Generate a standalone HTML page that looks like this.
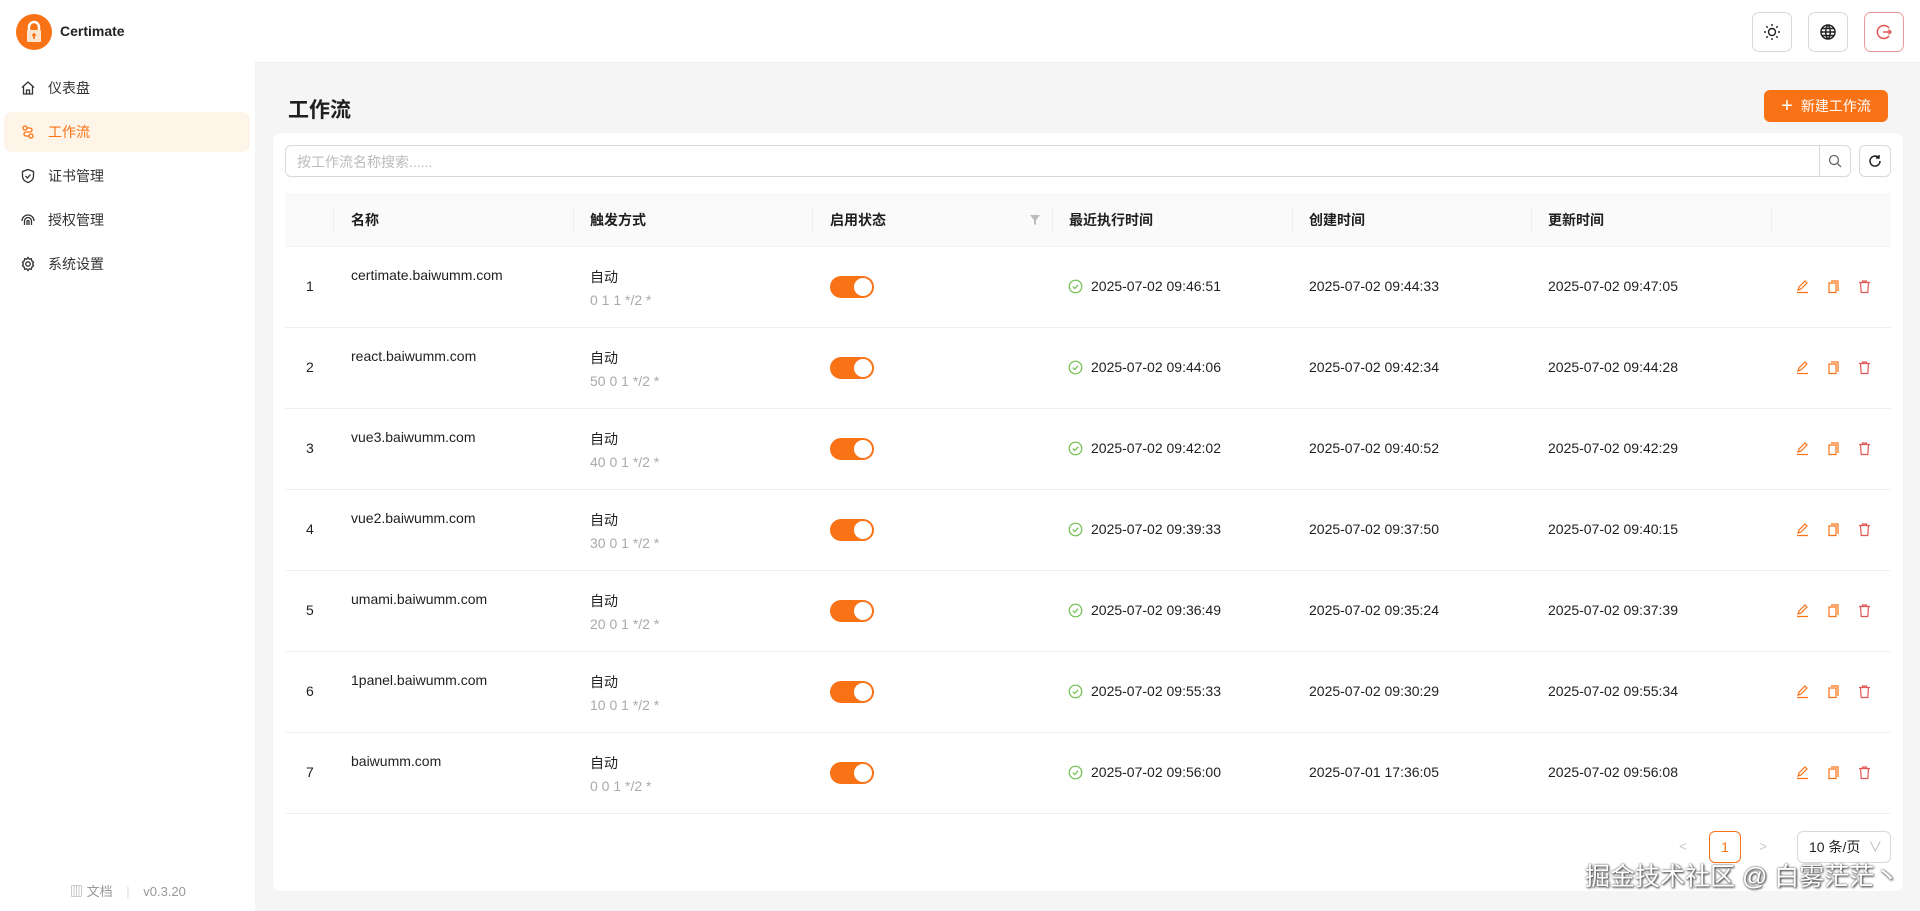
<!DOCTYPE html>
<html><head><meta charset="utf-8"><style>
*{box-sizing:border-box;margin:0;padding:0}
body{width:1920px;height:911px;overflow:hidden;font-family:"Liberation Sans","Noto Sans CJK SC",sans-serif;font-size:14px;color:#1f1f1f;background:#f5f5f5;position:relative}
.abs{position:absolute}
.side{left:0;top:0;width:255px;height:911px;background:#fff}
.top{left:255px;top:0;width:1665px;height:63px;background:#fff;border-bottom:1px solid #eee}
.nav{left:4px;width:246px;height:40px;border-radius:8px;display:flex;align-items:center;padding-left:16px;gap:12px;font-size:14px;color:#333}
.nav svg{width:16px;height:16px}
.tbtn{top:12px;width:40px;height:40px;border:1px solid #d9d9d9;border-radius:7px;background:#fff;display:flex;align-items:center;justify-content:center}
.card{left:273px;top:133px;width:1630px;height:758px;background:#fff;border-radius:8px}
.th{top:193px;height:54px;background:#fafafa;left:285px;width:1606px;border-bottom:1px solid #f0f0f0}
.hc{top:193px;height:54px;line-height:54px;font-weight:bold;font-size:14px}
.sep{top:207px;width:1px;height:26px;background:#f0f0f0}
.rowl{left:285px;width:1606px;height:1px;background:#f0f0f0}
.tog{width:44px;height:22px;border-radius:11px;background:#f97316}
.tog::after{content:"";position:absolute;right:2px;top:2px;width:18px;height:18px;border-radius:50%;background:#fff}
.gray{color:#aaa}
</style></head><body>
<div class="abs side"></div>
<div class="abs" style="left:16px;top:14px;width:36px;height:36px;border-radius:50%;background:#f97316"></div>
<svg class="abs" style="left:23px;top:19px" width="22" height="26" viewBox="0 0 22 26"><path d="M6 12V8a5 5 0 0 1 10 0v4" stroke="#fff" stroke-width="2.4" fill="none"/><rect x="4" y="11" width="14" height="12" rx="1" fill="#fde6cf"/><circle cx="11" cy="16" r="1.8" fill="#f97316"/><rect x="10.2" y="16" width="1.6" height="4" fill="#f97316"/></svg>
<div class="abs" style="left:60px;top:23px;font-size:14px;font-weight:bold;color:#222">Certimate</div>

<div class="abs nav" style="top:68px"><svg viewBox="0 0 16 16" fill="none" stroke="#333" stroke-width="1.3"><path d="M2 7.5L8 2l6 5.5M3.5 6.5V14h9V6.5M6.5 14v-4h3v4"/></svg>仪表盘</div>
<div class="abs nav" style="top:112px;background:#fff4e8;color:#f97316"><svg viewBox="0 0 16 16" fill="none" stroke="#f97316" stroke-width="1.3"><circle cx="5" cy="4" r="2"/><circle cx="11" cy="12" r="2"/><path d="M7 4h3a2 2 0 0 1 0 4H6a2 2 0 0 0 0 4h3"/></svg>工作流</div>
<div class="abs nav" style="top:156px"><svg viewBox="0 0 16 16" fill="none" stroke="#333" stroke-width="1.3"><path d="M8 1.5l5.5 2v4.5c0 3.5-2.5 5.5-5.5 6.5-3-1-5.5-3-5.5-6.5V3.5z"/><path d="M5.5 8l2 2 3-3.5"/></svg>证书管理</div>
<div class="abs nav" style="top:200px"><svg viewBox="0 0 16 16" fill="none" stroke="#333" stroke-width="1.3"><path d="M2 9a6 6 0 0 1 12 0M4.5 13V9a3.5 3.5 0 0 1 7 0v4M7 13V9.5a1 1 0 0 1 2 0V13"/></svg>授权管理</div>
<div class="abs nav" style="top:244px"><svg viewBox="0 0 16 16" fill="none" stroke="#333" stroke-width="1.3"><circle cx="8" cy="8" r="2.2"/><path d="M8 1.5l1.3 1.7 2.1-.4.4 2.1 1.7 1.3-1 1.8 1 1.8-1.7 1.3-.4 2.1-2.1-.4L8 14.5l-1.3-1.7-2.1.4-.4-2.1L2.5 9.8l1-1.8-1-1.8 1.7-1.3.4-2.1 2.1.4z"/></svg>系统设置</div>
<div class="abs" style="left:70px;top:881px;color:#999;font-size:13px">▥ 文档 <span style="color:#ddd;margin:0 10px">|</span> v0.3.20</div>

<div class="abs top"></div>
<div class="abs tbtn" style="left:1752px"><svg width="18" height="18" viewBox="0 0 18 18" fill="none" stroke="#222" stroke-width="1.4"><circle cx="9" cy="9" r="3.5"/><path d="M9 1v2M9 15v2M1 9h2M15 9h2M3.3 3.3l1.4 1.4M13.3 13.3l1.4 1.4M3.3 14.7l1.4-1.4M13.3 4.7l1.4-1.4"/></svg></div>
<div class="abs tbtn" style="left:1808px"><svg width="18" height="18" viewBox="0 0 18 18" fill="none" stroke="#222" stroke-width="1.5"><circle cx="9" cy="9" r="7"/><path d="M2 9h14M9 2c-3 3-3 11 0 14M9 2c3 3 3 11 0 14M3 5.5h12M3 12.5h12"/></svg></div>
<div class="abs tbtn" style="left:1864px;border-color:#e79a9a"><svg width="18" height="18" viewBox="0 0 18 18" fill="none" stroke="#e25555" stroke-width="1.5"><path d="M14 5A6.5 6.5 0 1 0 14 13M8 9h8M13.5 6.5L16 9l-2.5 2.5"/></svg></div>

<div class="abs" style="left:288px;top:94px;font-size:21px;font-weight:bold">工作流</div>
<div class="abs" style="left:1764px;top:90px;width:124px;height:32px;border-radius:6px;background:#f97316;color:#fff;display:flex;align-items:center;justify-content:center;font-size:14px;gap:8px"><span style="font-size:20px;font-weight:300;line-height:1">+</span>新建工作流</div>

<div class="abs card"></div>
<div class="abs" style="left:285px;top:145px;width:1566px;height:32px;border:1px solid #d9d9d9;border-radius:6px;background:#fff"></div>
<div class="abs" style="left:297px;top:152px;color:#bbb">按工作流名称搜索......</div>
<div class="abs" style="left:1819px;top:145px;width:1px;height:32px;background:#d9d9d9"></div>
<svg class="abs" style="left:1827px;top:153px" width="16" height="16" viewBox="0 0 16 16" fill="none" stroke="#666" stroke-width="1.3"><circle cx="7" cy="7" r="4.5"/><path d="M10.3 10.3L14 14"/></svg>
<div class="abs" style="left:1859px;top:145px;width:32px;height:32px;border:1px solid #d9d9d9;border-radius:6px;background:#fff"></div>
<svg class="abs" style="left:1867px;top:153px" width="16" height="16" viewBox="0 0 16 16" fill="none" stroke="#222" stroke-width="1.5"><path d="M13 8a5 5 0 1 1-1.5-3.5M12 2v3h-3"/></svg>

<div class="abs th"></div>
<div class="abs sep" style="left:333px"></div><div class="abs sep" style="left:573px"></div><div class="abs sep" style="left:812px"></div><div class="abs sep" style="left:1052px"></div><div class="abs sep" style="left:1292px"></div><div class="abs sep" style="left:1531px"></div><div class="abs sep" style="left:1771px"></div>
<div class="abs hc" style="left:351px">名称</div>
<div class="abs hc" style="left:590px">触发方式</div>
<div class="abs hc" style="left:830px">启用状态</div>
<svg class="abs" style="left:1029px;top:214px" width="12" height="12" viewBox="0 0 12 12"><path d="M1 1h10L7 6v5l-2-1V6z" fill="#bbb"/></svg>
<div class="abs hc" style="left:1069px">最近执行时间</div>
<div class="abs hc" style="left:1309px">创建时间</div>
<div class="abs hc" style="left:1548px">更新时间</div>

<div id="rows"></div>
<script>
const d=[["certimate.baiwumm.com","0 1 1 */2 *","2025-07-02 09:46:51","2025-07-02 09:44:33","2025-07-02 09:47:05"],
["react.baiwumm.com","50 0 1 */2 *","2025-07-02 09:44:06","2025-07-02 09:42:34","2025-07-02 09:44:28"],
["vue3.baiwumm.com","40 0 1 */2 *","2025-07-02 09:42:02","2025-07-02 09:40:52","2025-07-02 09:42:29"],
["vue2.baiwumm.com","30 0 1 */2 *","2025-07-02 09:39:33","2025-07-02 09:37:50","2025-07-02 09:40:15"],
["umami.baiwumm.com","20 0 1 */2 *","2025-07-02 09:36:49","2025-07-02 09:35:24","2025-07-02 09:37:39"],
["1panel.baiwumm.com","10 0 1 */2 *","2025-07-02 09:55:33","2025-07-02 09:30:29","2025-07-02 09:55:34"],
["baiwumm.com","0 0 1 */2 *","2025-07-02 09:56:00","2025-07-01 17:36:05","2025-07-02 09:56:08"]];
let h="";
d.forEach((r,i)=>{const t=247+i*81,c=t+40;
h+=`<div class="abs" style="left:306px;top:${c-9}px">${i+1}</div>
<div class="abs" style="left:351px;top:${t+20}px">${r[0]}</div>
<div class="abs" style="left:590px;top:${t+20}px">自动</div>
<div class="abs gray" style="left:590px;top:${t+45}px">${r[1]}</div>
<div class="abs tog" style="left:830px;top:${c-11}px"></div>
<svg class="abs" style="left:1068px;top:${c-8}px" width="15" height="15" viewBox="0 0 15 15" fill="none" stroke="#6fbf4f" stroke-width="1.2"><circle cx="7.5" cy="7.5" r="6.3"/><path d="M4.8 7.6l1.9 1.9 3.5-3.7"/></svg>
<div class="abs" style="left:1091px;top:${c-9}px">${r[2]}</div>
<div class="abs" style="left:1309px;top:${c-9}px">${r[3]}</div>
<div class="abs" style="left:1548px;top:${c-9}px">${r[4]}</div>
<svg class="abs" style="left:1795px;top:${c-8}px" width="15" height="15" viewBox="0 0 15 15" fill="none" stroke="#f97316" stroke-width="1.2"><path d="M3 11l1-3 6-6 2 2-6 6zM2 13.5h11"/></svg>
<svg class="abs" style="left:1826px;top:${c-8}px" width="15" height="15" viewBox="0 0 15 15" fill="none" stroke="#f97316" stroke-width="1.2"><path d="M5 2h7v10M3 4h7v9.5H3z"/></svg>
<svg class="abs" style="left:1857px;top:${c-8}px" width="15" height="15" viewBox="0 0 15 15" fill="none" stroke="#e25555" stroke-width="1.2"><path d="M2 3.5h11M5.5 3.5V2h4v1.5M3.5 3.5l.7 10h6.6l.7-10"/></svg>
<div class="abs rowl" style="top:${t+80}px"></div>`;});
document.getElementById("rows").innerHTML=h;
</script>

<div class="abs" style="left:1679px;top:838px;color:#ccc">&lt;</div>
<div class="abs" style="left:1709px;top:831px;width:32px;height:32px;border:1px solid #f97316;border-radius:6px;color:#f97316;text-align:center;line-height:30px">1</div>
<div class="abs" style="left:1759px;top:838px;color:#ccc">&gt;</div>
<div class="abs" style="left:1797px;top:831px;width:94px;height:32px;border:1px solid #d9d9d9;border-radius:6px;padding-left:11px;line-height:30px">10 条/页 <span style="color:#bbb;margin-left:4px">∨</span></div>
<div class="abs" style="left:1585px;top:857px;font-size:25px;color:#fff;text-shadow:0 0 2px #555,1px 1px 2px #333">掘金技术社区 @ 白雾茫茫丶</div>
</body></html>
